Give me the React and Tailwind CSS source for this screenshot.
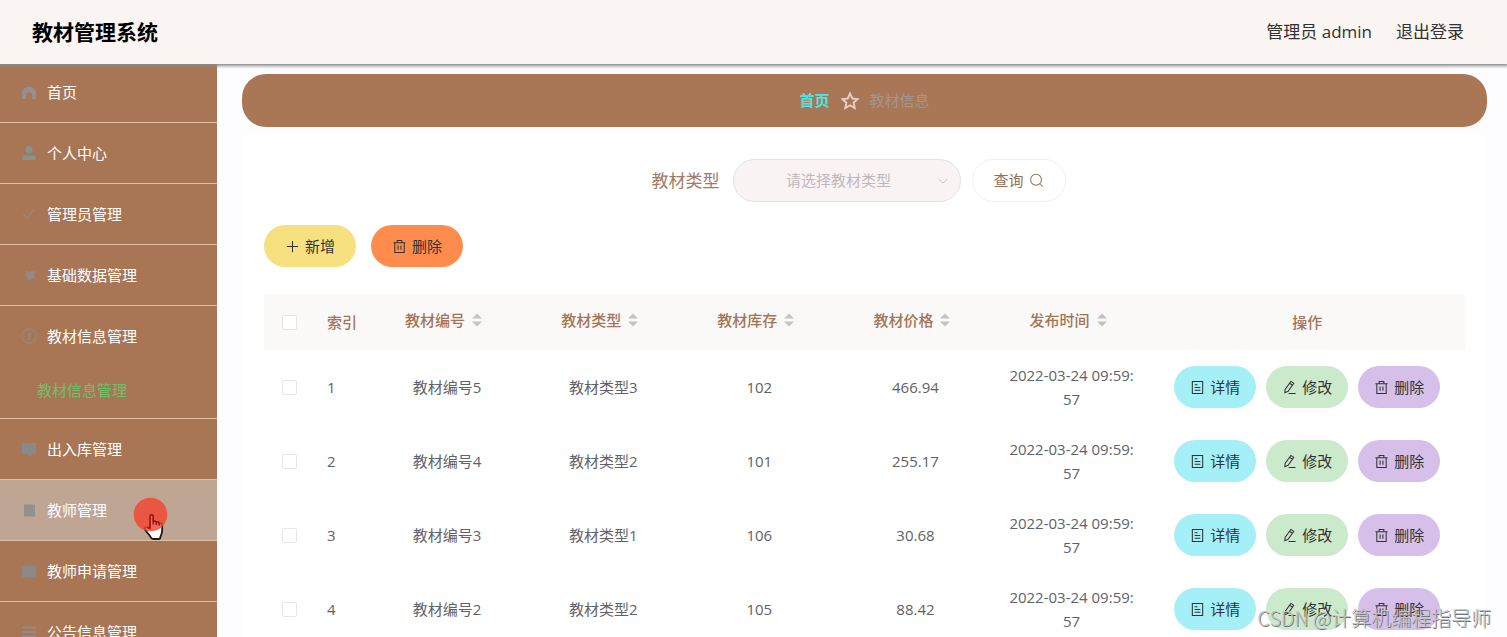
import React from "react";

const MENU = [
  { label: "首页", icon: "home" },
  { label: "个人中心", icon: "user" },
  { label: "管理员管理", icon: "check" },
  { label: "基础数据管理", icon: "send" },
  { label: "教材信息管理", icon: "info", children: ["教材信息管理"] },
  { label: "出入库管理", icon: "chat" },
  { label: "教师管理", icon: "doc", hover: true },
  { label: "教师申请管理", icon: "card" },
  { label: "公告信息管理", icon: "list" },
];

const COLUMNS = ["教材编号", "教材类型", "教材库存", "教材价格", "发布时间"];

const ROWS = [
  ["教材编号5", "教材类型3", "102", "466.94"],
  ["教材编号4", "教材类型2", "101", "255.17"],
  ["教材编号3", "教材类型1", "106", "30.68"],
  ["教材编号2", "教材类型2", "105", "88.42"],
];

function MenuIcon({ name }) {
  const shapes = {
    home: (
      <path
        d="M1 15V9.500C1 5.500 4 2.500 8 2.500s7 3 7 7V15h-4v-3.500a3 3 0 0 0-6 0V15z"
        fill="#958f93"
      />
    ),
    user: (
      <g fill="#859393">
        <circle cx="8" cy="4.500" r="3.500" />
        <path d="M1.500 15v-2.500c0-1.500 1-2 2.500-2h8c1.500 0 2.500.5 2.500 2V15z" />
      </g>
    ),
    check: (
      <path d="M2.500 7.500l4 5L13 3" fill="none" stroke="#a58069" strokeWidth="2" />
    ),
    send: (
      <path d="M4 3.500l4.500 1.500 5.500-2-1 5 1 4.500-4-1-3 2-1.500-3.500L3.500 8l2-1.500z" fill="#91898d" />
    ),
    info: (
      <g fill="none" stroke="#9b8378" strokeWidth="1.300">
        <circle cx="8" cy="8" r="7" />
        <path d="M9.500 4L7.500 12.500M6.500 6.500H9" />
      </g>
    ),
    chat: <path d="M1 2h14v10.500h-3.500L8.500 15.500 6.500 13H1z" fill="#88898b" />,
    doc: <path d="M3 2.500h11v12H3z" fill="#91928f" />,
    card: <path d="M1 2.500h14v12H1z" fill="#898985" />,
    list: (
      <path d="M1 3.500h14M1 8h14M1 12.500h14" stroke="#92898c" strokeWidth="2" />
    ),
  };
  return (
    <svg viewBox="0 0 16 16" className="size-4 shrink-0" aria-hidden="true">
      {shapes[name]}
    </svg>
  );
}

function LineIcon({ name }) {
  const paths = {
    plus: "M8 2v12M2 8h12",
    trash: "M1.500 4h13M3 4v10.500h10V4M5.500 4V1.500h5V4M6.500 7v4.500M9.500 7v4.500",
    detail: "M2.500 1.500h11v13h-11zM5 5h3M5 8h6M5 11h6",
    edit: "M9.500 1.500l3 2L6.500 12 3 13.500 3.300 10zM8 3.500l3 2M7 14.500h7.500",
    search: "M12 12l2.500 2.500M7.500 13a5.800 5.800 0 1 0 0-11.600 5.800 5.800 0 0 0 0 11.600z",
  };
  return (
    <svg
      viewBox="0 0 16 16"
      className="size-[15px] shrink-0"
      fill="none"
      stroke="currentColor"
      strokeWidth="1.100"
      aria-hidden="true"
    >
      <path d={paths[name]} />
    </svg>
  );
}

function ActionButton({ icon, className, children }) {
  return (
    <button
      type="button"
      className={
        "flex h-[42px] items-center justify-center gap-[5px] rounded-full text-[15px] text-[#333333] " +
        className
      }
    >
      <LineIcon name={icon} />
      {children}
    </button>
  );
}

function Checkbox({ label }) {
  return (
    <input
      type="checkbox"
      aria-label={label}
      className="mx-auto block size-[15px] appearance-none rounded-[2px] border border-[#e6e6ea] bg-white"
    />
  );
}

function Sidebar() {
  return (
    <nav className="-mt-0.5 w-[217px] shrink-0 bg-[#a87655]">
      <ul>
        {MENU.map((item) => (
          <li key={item.label} className="border-b border-[#e3bd9f]">
            <a
              href="#"
              className={
                "flex h-[60px] items-center gap-2.5 pl-[21px] text-[15px] text-white " +
                (item.hover ? "bg-[#bfa694]" : "")
              }
            >
              <MenuIcon name={item.icon} />
              {item.label}
            </a>
            {item.children && (
              <div className="pb-1">
                {item.children.map((child) => (
                  <a
                    key={child}
                    href="#"
                    className="flex h-12 items-center pl-[37px] text-[15px] text-[#6cc069]"
                  >
                    {child}
                  </a>
                ))}
              </div>
            )}
          </li>
        ))}
      </ul>
    </nav>
  );
}

function SearchForm() {
  return (
    <form className="flex items-center justify-center pr-3">
      <label htmlFor="type" className="pr-[13px] text-[17px] text-[#a27a63]">
        教材类型
      </label>
      <div className="relative">
        <select
          id="type"
          defaultValue=""
          className="h-[43px] w-[228px] appearance-none rounded-full border border-[#e2e0ea] bg-[#faf3f3] pr-4 text-center text-[15px] text-[#bfb8bb]"
        >
          <option value="">请选择教材类型</option>
        </select>
        <svg
          viewBox="0 0 12 12"
          className="pointer-events-none absolute top-4 right-3 size-3"
          fill="none"
          stroke="#c9c5cc"
          aria-hidden="true"
        >
          <path d="M1.500 4l4.500 4 4.500-4" />
        </svg>
      </div>
      <button
        type="button"
        className="ml-[11px] flex h-[43px] w-[94px] items-center justify-center gap-[5px] rounded-full border border-[#efeff6] bg-white text-[15px] text-[#8f6f58]"
      >
        查询
        <LineIcon name="search" />
      </button>
    </form>
  );
}

function BookTable() {
  return (
    <table className="mt-[27px] w-full table-fixed text-center text-[15px] leading-6 text-[#606266]">
      <colgroup>
        <col className="w-[50px]" />
        <col className="w-[55px]" />
        {COLUMNS.map((c) => (
          <col key={c} className="w-[13%]" />
        ))}
        <col />
      </colgroup>
      <thead className="bg-[#faf9f8] text-[#a2745a]">
        <tr className="h-14">
          <th>
            <Checkbox label="全选" />
          </th>
          <th className="pl-[13px] text-left font-medium">索引</th>
          {COLUMNS.map((c) => (
            <th key={c} className="pb-1 font-medium">
              <span className="inline-flex items-center">
                {c}
                <svg viewBox="0 0 24 16" className="h-4 w-6" fill="#c3c2c5" aria-hidden="true">
                  <path d="M7 6.500L12 1.500l5 5zM7 9.500l5 5 5-5z" />
                </svg>
              </span>
            </th>
          ))}
          <th className="font-medium">操作</th>
        </tr>
      </thead>
      <tbody>
        {ROWS.map((row, i) => (
          <tr key={row[0]} className="h-[74px]">
            <td>
              <Checkbox label={"选择 " + (i + 1)} />
            </td>
            <td className="pl-[13px] text-left">{i + 1}</td>
            {row.map((cell) => (
              <td key={cell}>{cell}</td>
            ))}
            <td className="px-3 break-all">2022-03-24 09:59:57</td>
            <td>
              <div className="flex justify-center gap-2.5">
                <ActionButton icon="detail" className="w-[82px] bg-[#a5eff6]">
                  详情
                </ActionButton>
                <ActionButton icon="edit" className="w-[82px] bg-[#cbe9cb]">
                  修改
                </ActionButton>
                <ActionButton icon="trash" className="w-[82px] bg-[#d6c0ea]">
                  删除
                </ActionButton>
              </div>
            </td>
          </tr>
        ))}
      </tbody>
    </table>
  );
}

function Pointer() {
  return (
    <div className="pointer-events-none absolute top-[497px] left-[133px]">
      <svg viewBox="0 0 36 44" className="h-11 w-9" aria-hidden="true">
        <path
          id="hand"
          d="M17 31.500V19.500c0-2.400 3.200-2.400 3.200 0v5.500c.5-1.500 3-1.200 3.200.6.700-1.200 2.900-.8 3 1 .8-1 2.800-.5 2.800 1.500V33c0 3-.8 4.500-1.700 6.500 0 1.500-.5 2.500-2 2.500h-5c-1.600 0-2.600-1-3.200-2.500-1.500-2.500-3.800-4.500-5.300-7-.9-2.200 1.300-3.200 2.700-2z"
          fill="#ffffff"
          stroke="#1c1714"
          strokeWidth="1.800"
        />
        <circle cx="17.500" cy="17.500" r="16.800" fill="#f2452f" fillOpacity="0.820" />
        <path
          d="M17 31.500V19.500c0-2.400 3.200-2.400 3.200 0v8M20.200 25c.5-1.500 3-1.200 3.200.6v2.500M23.400 25.600c.7-1.200 2.900-.8 3 1v2M17 31.500l-2.300-1"
          fill="none"
          stroke="#9a1512"
          strokeWidth="1.400"
        />
      </svg>
    </div>
  );
}

export default function App() {
  return (
    <div className="relative flex h-screen flex-col overflow-hidden bg-[#fdfcff] font-['Open_Sans','Noto_Sans_CJK_SC',sans-serif]">
      <header className="z-10 flex h-16 shrink-0 items-center justify-between bg-[#faf5f2] pr-[43px] pl-8 shadow-[0_1px_3px_1px_#85888a]">
        <h1 className="pt-0.5 text-[21px] font-bold text-black">教材管理系统</h1>
        <div className="flex gap-6 text-[17px] text-[#333333]">
          <span>管理员 admin</span>
          <a href="#">退出登录</a>
        </div>
      </header>

      <div className="flex min-h-0 flex-1">
        <Sidebar />
        <main className="min-w-0 flex-1 pt-2.5 pr-5 pl-[25px]">
          <div className="flex h-[53px] items-center justify-center gap-2.5 rounded-3xl bg-[#a97756] text-[15px]">
            <a href="#" className="font-bold text-[#4fe3e3]">
              首页
            </a>
            <svg viewBox="0 0 20 20" className="size-5" aria-hidden="true">
              <path
                d="M10 2.500l2.300 5 5.200.6-3.900 3.600 1.100 5.300L10 14.300 5.300 17l1.100-5.300-3.900-3.600 5.200-.6z"
                fill="none"
                stroke="#e6cfc4"
                strokeWidth="1.900"
              />
            </svg>
            <span className="text-[#a3958f]">教材信息</span>
          </div>

          <section className="mt-2 bg-white px-[22px] pt-6">
            <SearchForm />
            <div className="mt-[23px] flex gap-[15px]">
              <ActionButton icon="plus" className="w-[92px] bg-[#f7e07f]">
                新增
              </ActionButton>
              <ActionButton icon="trash" className="w-[92px] bg-[#ff8c4d]">
                删除
              </ActionButton>
            </div>
            <BookTable />
          </section>
        </main>
      </div>

      <Pointer />
      <div className="pointer-events-none absolute right-4 bottom-1 z-20 font-['Noto_Sans_CJK_SC',sans-serif] text-[20px] leading-[30px] font-light text-[#c4c4c4] [text-shadow:1px_1px_0_#777777]">
        CSDN @计算机编程指导师
      </div>
    </div>
  );
}
